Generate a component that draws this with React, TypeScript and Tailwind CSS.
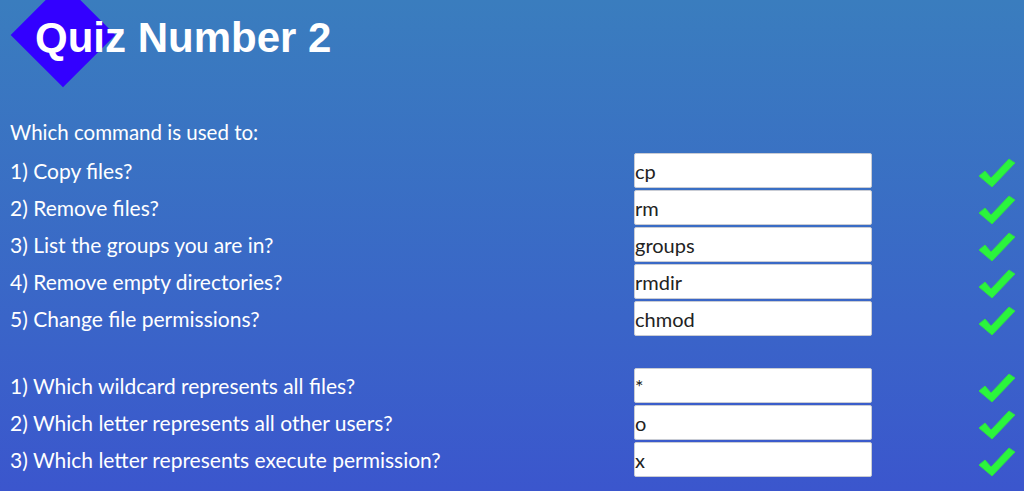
import React from 'react';

type Row = { q: string; a: string };

const groupOne: Row[] = [
  { q: '1) Copy files?', a: 'cp' },
  { q: '2) Remove files?', a: 'rm' },
  { q: '3) List the groups you are in?', a: 'groups' },
  { q: '4) Remove empty directories?', a: 'rmdir' },
  { q: '5) Change file permissions?', a: 'chmod' },
];

const groupTwo: Row[] = [
  { q: '1) Which wildcard represents all files?', a: '*' },
  { q: '2) Which letter represents all other users?', a: 'o' },
  { q: '3) Which letter represents execute permission?', a: 'x' },
];

function Tick() {
  return (
    <svg width="38" height="32" viewBox="0 0 38 32" className="shrink-0">
      <path
        d="M1 19 L7 14 L13 21 L31 2 L37 6 L14 30 Z"
        fill="#2bf53c"
        stroke="#2fd84a"
        strokeWidth="1"
        strokeLinejoin="round"
      />
    </svg>
  );
}

function QuizRow({ row }: { row: Row }) {
  return (
    <div className="flex items-center h-[37px]">
      <div className="w-[634px] shrink-0 pl-[10px] text-[21px] text-white whitespace-nowrap">{row.q}</div>
      <input
        readOnly
        value={row.a}
        className="w-[238px] h-[35px] shrink-0 bg-white rounded-[2px] border border-[#c9ccd4] px-0 text-[20px] text-[#222] outline-none font-['Lato',sans-serif]"
      />
      <div className="flex-1 flex justify-end pr-[8px] pt-[4px]">
        <Tick />
      </div>
    </div>
  );
}

export default function App() {
  return (
    <div className="w-[1024px] h-[491px] overflow-hidden bg-gradient-to-b from-[#3a7dbe] to-[#3b56cd] font-['Lato',sans-serif]">
      {/* Header */}
      <div className="relative h-[112px]">
        <div className="absolute left-[26px] top-[-2px] w-[74px] h-[74px] bg-[#3300ff] rotate-45" />
        <h1 className="relative pl-[35px] pt-[14px] text-[42px] leading-[48px] font-bold text-white font-['Liberation_Sans',Arial,sans-serif]">
          Quiz Number 2
        </h1>
      </div>

      <div className="pl-[10px] text-[20.5px] text-white h-[40px] leading-[40px]">Which command is used to:</div>

      <div className="flex flex-col">
        {groupOne.map((r) => (
          <QuizRow key={r.q} row={r} />
        ))}
      </div>

      <div className="h-[30px]" />

      <div className="flex flex-col">
        {groupTwo.map((r) => (
          <QuizRow key={r.q} row={r} />
        ))}
      </div>
    </div>
  );
}
